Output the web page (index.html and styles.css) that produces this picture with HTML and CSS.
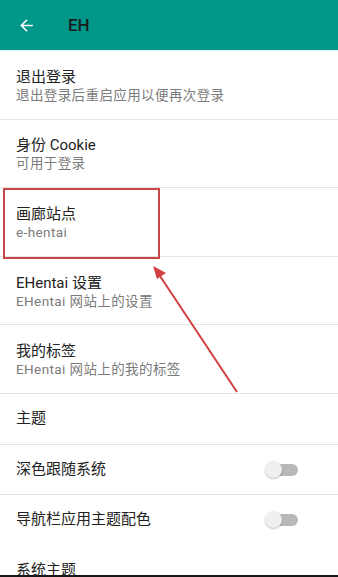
FILE: index.html
```html
<!DOCTYPE html>
<html lang="zh-CN">
<head>
    <meta charset="UTF-8">
    <meta name="viewport" content="width=device-width, initial-scale=1.0">
    <title>EH</title>
    <link rel="stylesheet" href="styles.css">
</head>
<body>
    <div class="screen">
        <div class="appbar">
            <svg class="back" viewBox="0 0 24 24" width="19" height="19">
                <path d="M20 11H7.83l5.59-5.59L12 4l-8 8 8 8 1.41-1.41L7.83 13H20v-2z" fill="#fff"/>
            </svg>
            <span class="appbar-title">EH</span>
        </div>

        <div class="pref">
            <div class="pref-title">退出登录</div>
            <div class="pref-summary">退出登录后重启应用以便再次登录</div>
        </div>
        <div class="pref">
            <div class="pref-title">身份 Cookie</div>
            <div class="pref-summary">可用于登录</div>
        </div>
        <div class="pref">
            <div class="pref-title">画廊站点</div>
            <div class="pref-summary">e-hentai</div>
        </div>
        <div class="pref">
            <div class="pref-title">EHentai 设置</div>
            <div class="pref-summary">EHentai 网站上的设置</div>
        </div>
        <div class="pref">
            <div class="pref-title">我的标签</div>
            <div class="pref-summary">EHentai 网站上的我的标签</div>
        </div>
        <div class="pref pref-category">
            <div class="pref-title">主题</div>
        </div>
        <div class="pref pref-switch">
            <div class="pref-title">深色跟随系统</div>
            <span class="switch"><span class="thumb"></span></span>
        </div>
        <div class="pref pref-switch no-line">
            <div class="pref-title">导航栏应用主题配色</div>
            <span class="switch"><span class="thumb"></span></span>
        </div>
        <div class="pref pref-category no-line">
            <div class="pref-title">系统主题</div>
        </div>

        <!-- annotation: box + arrow -->
        <div class="mark-box"></div>
        <svg class="mark-arrow" width="338" height="577" viewBox="0 0 338 577">
            <line x1="237" y1="392" x2="158" y2="273" stroke="#d23f3f" stroke-width="2"/>
            <polygon points="153,266 166,273 157,279" fill="#d23f3f"/>
        </svg>
    </div>
</body>
</html>
```

FILE: styles.css
```css
* {
    box-sizing: border-box;
}
body {
    margin: 0;
    background: #fff;
    font-family: Roboto, "Noto Sans CJK SC", sans-serif;
}
.screen {
    position: relative;
    width: 338px;
    height: 577px;
    overflow: hidden;
    border-bottom: 2px solid #151515;
}
.appbar {
    height: 51px;
    background: #009688;
    display: flex;
    align-items: center;
    padding-left: 17px;
    border-bottom: 1px solid #e6f2f1;
}
.back {
    display: block;
}
.appbar-title {
    margin-left: 32px;
    font-size: 17px;
    font-weight: 500;
    color: #1a1f1e;
}
.pref {
    height: 68.6px;
    padding: 2px 16px 0;
    display: flex;
    flex-direction: column;
    justify-content: center;
    border-bottom: 1px solid #e4e4e4;
}
.pref-title {
    font-size: 15px;
    line-height: 19px;
    color: #222;
}
.pref-summary {
    font-size: 13.5px;
    letter-spacing: 0.4px;
    line-height: 17px;
    color: #7b7b7b;
}
.pref-category {
    height: 51px;
    padding-top: 0;
}
.pref-switch {
    height: 50px;
    padding-top: 0;
    flex-direction: row;
    align-items: center;
    justify-content: space-between;
    padding-right: 40px;
}
.no-line {
    border-bottom: none;
}
.switch {
    position: relative;
    width: 33px;
    height: 17px;
    display: block;
}
.switch::before {
    content: "";
    position: absolute;
    left: 5px;
    right: 0;
    top: 3px;
    height: 12px;
    border-radius: 6px;
    background: #b8b8b8;
}
.thumb {
    position: absolute;
    left: 0;
    top: 0;
    width: 17px;
    height: 17px;
    border-radius: 50%;
    background: #efefef;
    box-shadow: 0 1px 2px rgba(0, 0, 0, 0.25);
}
.mark-box {
    position: absolute;
    left: 3px;
    top: 188px;
    width: 157px;
    height: 71px;
    border: 2px solid #c8484a;
}
.mark-arrow {
    position: absolute;
    left: 0;
    top: 0;
    pointer-events: none;
}
```
